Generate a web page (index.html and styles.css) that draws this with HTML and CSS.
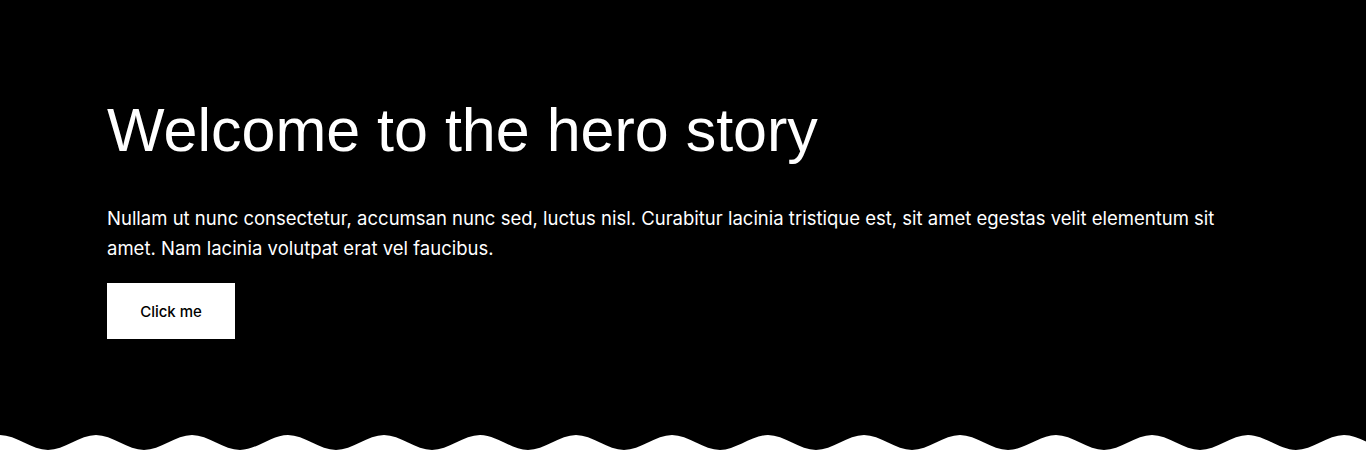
FILE: index.html
```html
<!DOCTYPE html>
<html lang="en">
<head>
<meta charset="utf-8">
<title>Hero</title>
<link rel="stylesheet" href="styles.css">
</head>
<body>
<section class="hero">
  <div class="hero-inner">
    <h1 class="hero-title">Welcome to the hero story</h1>
    <p class="hero-text">Nullam ut nunc consectetur, accumsan nunc sed, luctus nisl. Curabitur lacinia tristique est, sit amet egestas velit elementum sit amet. Nam lacinia volutpat erat vel faucibus.</p>
    <a class="hero-button" href="#">Click me</a>
  </div>
  <svg class="hero-wave" viewBox="0 0 1440 16" width="1440" height="16" aria-hidden="true">
    <path fill="#fff" d="M0 0 c16 0 32 15 48 15 s32 -15 48 -15 s32 15 48 15 s32 -15 48 -15 s32 15 48 15 s32 -15 48 -15 s32 15 48 15 s32 -15 48 -15 s32 15 48 15 s32 -15 48 -15 s32 15 48 15 s32 -15 48 -15 s32 15 48 15 s32 -15 48 -15 s32 15 48 15 s32 -15 48 -15 s32 15 48 15 s32 -15 48 -15 s32 15 48 15 s32 -15 48 -15 s32 15 48 15 s32 -15 48 -15 s32 15 48 15 s32 -15 48 -15 s32 15 48 15 s32 -15 48 -15 s32 15 48 15 s32 -15 48 -15 s32 15 48 15 s32 -15 48 -15 s32 15 48 15 s32 -15 48 -15 s32 15 48 15 s32 -15 48 -15 V16 H0 Z"/>
  </svg>
</section>
</body>
</html>
```
FILE: styles.css
```css
* { box-sizing: border-box; }
html, body { margin: 0; padding: 0; background: #fff; }
body { font-family: Inter, "Noto Sans", sans-serif; }
.hero {
  background: #000;
  color: #fff;
  display: flex;
  flex-direction: column;
  height: 451px;
  overflow: hidden;
}
.hero-inner {
  padding: 93px 107px 0;
  flex: 1;
}
.hero-title {
  margin: 0;
  font-family: "Liberation Sans", Arial, sans-serif;
  font-size: 61px;
  font-weight: 400;
  line-height: 74px;
  letter-spacing: 0;
}
.hero-text {
  margin: 36px 0 0;
  font-size: 18.5px;
  line-height: 30px;
  max-width: 1152px;
}
.hero-button {
  display: flex;
  align-items: center;
  justify-content: center;
  margin-top: 20px;
  width: 128px;
  height: 56px;
  background: #fff;
  color: #000;
  text-decoration: none;
  font-size: 15px;
  font-weight: 500;
}
.hero-wave {
  display: block;
  width: 1440px;
  height: 16px;
  flex: none;
}
```
